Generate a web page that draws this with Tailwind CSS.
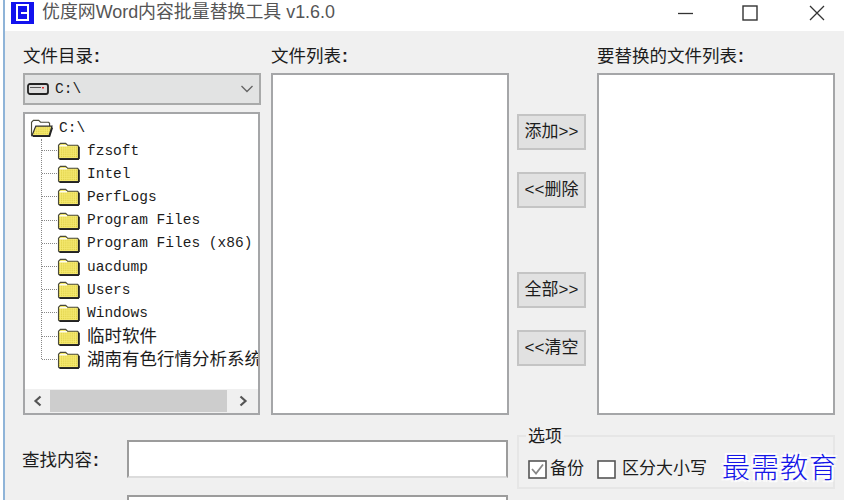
<!DOCTYPE html>
<html lang="zh">
<head>
<meta charset="utf-8">
<title>优度网Word内容批量替换工具</title>
<script src="https://cdn.jsdelivr.net/npm/@tailwindcss/browser@4"></script>
</head>
<body class="m-0 overflow-hidden bg-white">
<svg width="0" height="0" class="absolute">
  <defs>
    <pattern id="dither" width="2" height="2" patternUnits="userSpaceOnUse">
      <rect width="2" height="2" fill="#f6ea72"/>
      <rect width="1" height="1" fill="#d6c636"/>
    </pattern>
    <symbol id="folder" viewBox="0 0 24 20">
      <path d="M1.5 18V4.5L3.5 2.5H9L11 4.5H21.5L22.5 5.5V18.5H2Z" fill="url(#dither)" stroke="#4a4a3a" stroke-width="1.2"/>
      <path d="M2.5 5H10.5" stroke="#fff" stroke-width="1.4"/>
      <path d="M2.5 19H23M23 6V19" stroke="#222" stroke-width="1.8"/>
    </symbol>
    <symbol id="folder-open" viewBox="0 0 24 20">
      <path d="M1.5 18V4.5L3.5 2.5H9L11 4.5H19.5L20.5 5.5V18.5H2Z" fill="#fff" stroke="#4a4a3a" stroke-width="1.2"/>
      <path d="M2 18.5L6 8.5H23L20 18.5Z" fill="url(#dither)" stroke="#333" stroke-width="1.3"/>
      <path d="M3 19.3H20.5L23.5 10" fill="none" stroke="#222" stroke-width="1.5"/>
    </symbol>
  </defs>
</svg>
<div class="relative w-[841px] h-[500px] overflow-hidden border-l-[2px] border-[#8fb4d8] ml-[3px] text-[#1c1c1c] [font-family:'Liberation_Sans','Noto_Sans_CJK_SC',sans-serif]">

  <!-- title bar -->
  <div class="h-[31px] bg-white flex items-center pb-[6px]">
    <div class="w-[23px] h-[22px] ml-[6px] shrink-0 bg-[#1212ee] flex items-center justify-center">
      <div class="w-[13px] h-[17px] border-2 border-white flex flex-col justify-center pl-[3px]"><div class="h-[2px] w-[6px] bg-white"></div></div>
    </div>
    <span class="ml-[8px] text-[17.9px] text-[#555] whitespace-nowrap">优度网Word内容批量替换工具 v1.6.0</span>
    <div class="ml-auto mr-[18px] flex items-center">
      <svg width="18" height="18" viewBox="0 0 18 18" class="mr-[46px]"><path d="M1 9.5H16" stroke="#333" stroke-width="1.3"/></svg>
      <svg width="18" height="18" viewBox="0 0 18 18" class="mr-[49px]"><rect x="2" y="2" width="14" height="14" fill="none" stroke="#333" stroke-width="1.4"/></svg>
      <svg width="18" height="18" viewBox="0 0 18 18"><path d="M2 2L16 16M16 2L2 16" stroke="#333" stroke-width="1.3"/></svg>
    </div>
  </div>

  <!-- body -->
  <div class="h-[469px] bg-[#f0f0f0] pl-[18px] pt-[13px]">
    <div class="flex h-[371px]">

      <!-- directory column -->
      <div class="w-[238px] flex flex-col">
        <div class="h-[29px] text-[17.5px] leading-[25px]">文件目录<span class="ml-[1px] font-bold">:</span></div>
        <div class="h-[32px] bg-[#e2e3e3] border-2 border-[#a9aaaa] flex items-center pl-[2px] pr-[5px]">
          <svg width="22" height="14" viewBox="0 0 22 14"><rect x="1" y="2" width="20" height="10" rx="2" fill="#ddd" stroke="#222" stroke-width="1.8"/><path d="M3 5.5H14" stroke="#555"/><rect x="15" y="5" width="2" height="1.5" fill="#d33"/></svg>
          <span class="ml-[6px] mt-[2px] text-[14.5px] [font-family:'Liberation_Mono',monospace]">C:\</span>
          <svg width="14" height="8" viewBox="0 0 14 8" class="ml-auto"><path d="M1.5 1L7 6.5L12.5 1" fill="none" stroke="#666" stroke-width="1.4"/></svg>
        </div>
        <div class="mt-[7px] h-[303px] bg-white border-2 border-[#a5a6a8] flex flex-col w-[237px]">
          <div class="flex-1 overflow-hidden pt-[2px] pl-[5px]">
            <div class="flex items-center h-[23px]">
              <svg width="23" height="19" class="shrink-0"><use href="#folder-open"/></svg>
              <span class="ml-[6px] mt-[2px] text-[14.5px] [font-family:'Liberation_Mono',monospace]">C:\</span>
            </div>
            <div class="ml-[11px] border-l border-dotted border-[#888] h-[220px]">
              <div class="flex items-center h-[23.2px] whitespace-nowrap"><div class="w-[15px] shrink-0 border-t border-dotted border-[#888]"></div><svg width="23" height="19" class="shrink-0"><use href="#folder"/></svg><span class="ml-[7px] mt-[2px] text-[14.5px] [font-family:'Liberation_Mono',monospace]">fzsoft</span></div>
              <div class="flex items-center h-[23.2px] whitespace-nowrap"><div class="w-[15px] shrink-0 border-t border-dotted border-[#888]"></div><svg width="23" height="19" class="shrink-0"><use href="#folder"/></svg><span class="ml-[7px] mt-[2px] text-[14.5px] [font-family:'Liberation_Mono',monospace]">Intel</span></div>
              <div class="flex items-center h-[23.2px] whitespace-nowrap"><div class="w-[15px] shrink-0 border-t border-dotted border-[#888]"></div><svg width="23" height="19" class="shrink-0"><use href="#folder"/></svg><span class="ml-[7px] mt-[2px] text-[14.5px] [font-family:'Liberation_Mono',monospace]">PerfLogs</span></div>
              <div class="flex items-center h-[23.2px] whitespace-nowrap"><div class="w-[15px] shrink-0 border-t border-dotted border-[#888]"></div><svg width="23" height="19" class="shrink-0"><use href="#folder"/></svg><span class="ml-[7px] mt-[2px] text-[14.5px] [font-family:'Liberation_Mono',monospace]">Program Files</span></div>
              <div class="flex items-center h-[23.2px] whitespace-nowrap"><div class="w-[15px] shrink-0 border-t border-dotted border-[#888]"></div><svg width="23" height="19" class="shrink-0"><use href="#folder"/></svg><span class="ml-[7px] mt-[2px] text-[14.5px] [font-family:'Liberation_Mono',monospace]">Program Files (x86)</span></div>
              <div class="flex items-center h-[23.2px] whitespace-nowrap"><div class="w-[15px] shrink-0 border-t border-dotted border-[#888]"></div><svg width="23" height="19" class="shrink-0"><use href="#folder"/></svg><span class="ml-[7px] mt-[2px] text-[14.5px] [font-family:'Liberation_Mono',monospace]">uacdump</span></div>
              <div class="flex items-center h-[23.2px] whitespace-nowrap"><div class="w-[15px] shrink-0 border-t border-dotted border-[#888]"></div><svg width="23" height="19" class="shrink-0"><use href="#folder"/></svg><span class="ml-[7px] mt-[2px] text-[14.5px] [font-family:'Liberation_Mono',monospace]">Users</span></div>
              <div class="flex items-center h-[23.2px] whitespace-nowrap"><div class="w-[15px] shrink-0 border-t border-dotted border-[#888]"></div><svg width="23" height="19" class="shrink-0"><use href="#folder"/></svg><span class="ml-[7px] mt-[2px] text-[14.5px] [font-family:'Liberation_Mono',monospace]">Windows</span></div>
              <div class="flex items-center h-[23.2px] whitespace-nowrap"><div class="w-[15px] shrink-0 border-t border-dotted border-[#888]"></div><svg width="23" height="19" class="shrink-0"><use href="#folder"/></svg><span class="ml-[7px] text-[17.5px]">临时软件</span></div>
              <div class="flex items-center h-[23.2px] whitespace-nowrap"><div class="w-[15px] shrink-0 border-t border-dotted border-[#888]"></div><svg width="23" height="19" class="shrink-0"><use href="#folder"/></svg><span class="ml-[7px] text-[17.5px]">湖南有色行情分析系统</span></div>
            </div>
          </div>
          <div class="h-[24px] bg-[#f0f0f0] flex items-center">
            <div class="w-[25px] flex justify-center"><svg width="10" height="12" viewBox="0 0 10 12"><path d="M7.5 1.5L2.5 6L7.5 10.5" fill="none" stroke="#555" stroke-width="2.2"/></svg></div>
            <div class="w-[177px] h-[22px] bg-[#cdcdcd]"></div>
            <div class="flex-1 flex justify-center"><svg width="10" height="12" viewBox="0 0 10 12"><path d="M2.5 1.5L7.5 6L2.5 10.5" fill="none" stroke="#555" stroke-width="2.2"/></svg></div>
          </div>
        </div>
      </div>

      <!-- file list column -->
      <div class="ml-[10px] w-[238px] flex flex-col">
        <div class="h-[29px] text-[17.5px] leading-[25px]">文件列表<span class="ml-[1px] font-bold">:</span></div>
        <div class="h-[342px] bg-white border-2 border-[#a5a6a8]"></div>
      </div>

      <!-- buttons -->
      <div class="ml-[8px] w-[69px] pt-[70px] flex flex-col text-[17px]">
        <button class="h-[36px] bg-[#e1e1e1] border-2 border-[#c4c4c4]">添加&gt;&gt;</button>
        <button class="mt-[22px] h-[36px] bg-[#e1e1e1] border-2 border-[#c4c4c4]">&lt;&lt;删除</button>
        <button class="mt-[64px] h-[36px] bg-[#e1e1e1] border-2 border-[#c4c4c4]">全部&gt;&gt;</button>
        <button class="mt-[22px] h-[36px] bg-[#e1e1e1] border-2 border-[#c4c4c4]">&lt;&lt;清空</button>
      </div>

      <!-- target list column -->
      <div class="ml-[11px] w-[238px] flex flex-col">
        <div class="h-[29px] text-[17.5px] leading-[25px] whitespace-nowrap">要替换的文件列表<span class="ml-[1px] font-bold">:</span></div>
        <div class="h-[342px] bg-white border-2 border-[#a5a6a8]"></div>
      </div>
    </div>

    <!-- bottom row -->
    <div class="flex mt-[25px]">
      <div class="w-[105px] -ml-[1px] pt-[8px] text-[17.5px] leading-[24px] whitespace-nowrap">查找内容<span class="ml-[1px] font-bold">:</span></div>
      <div class="w-[381px] flex flex-col">
        <div class="h-[38px] bg-white border-2 border-[#9c9c9c] border-b-[#dcdcdc]"></div>
        <div class="mt-[17px] h-[38px] bg-white border-2 border-[#9c9c9c]"></div>
      </div>
      <div class="relative ml-[9px] -mt-[5px] w-[318px] h-[54px] border-2 border-[#e6e6e6] flex items-center pl-[9px] pt-[14px] text-[17px]">
        <span class="absolute -top-[12px] left-[7px] bg-[#f0f0f0] px-[2px] leading-[24px]">选项</span>
        <svg width="19" height="19" viewBox="0 0 19 19"><rect x="1" y="1" width="17" height="17" fill="#fff" stroke="#555" stroke-width="1.6"/><path d="M4 9L8 13.5L15 4.5" fill="none" stroke="#888" stroke-width="1.8"/></svg>
        <span class="ml-[3px]">备份</span>
        <svg width="19" height="19" viewBox="0 0 19 19" class="ml-[13px]"><rect x="1" y="1" width="17" height="17" fill="#fff" stroke="#555" stroke-width="1.6"/></svg>
        <span class="ml-[6px] whitespace-nowrap">区分大小写</span>
      </div>
    </div>
  </div>

  <!-- watermark over the window -->
  <div class="absolute left-[717px] top-[449px] text-[28px] leading-[34px] tracking-[1px] font-light text-[#1515e8] whitespace-nowrap [text-shadow:0_0_3px_#fff,2px_2px_1px_#fff,-2px_-2px_1px_#fff,2px_-2px_1px_#fff,-2px_2px_1px_#fff] [font-family:'Noto_Sans_CJK_SC',sans-serif]">最需教育</div>
</div>
</body>
</html>
